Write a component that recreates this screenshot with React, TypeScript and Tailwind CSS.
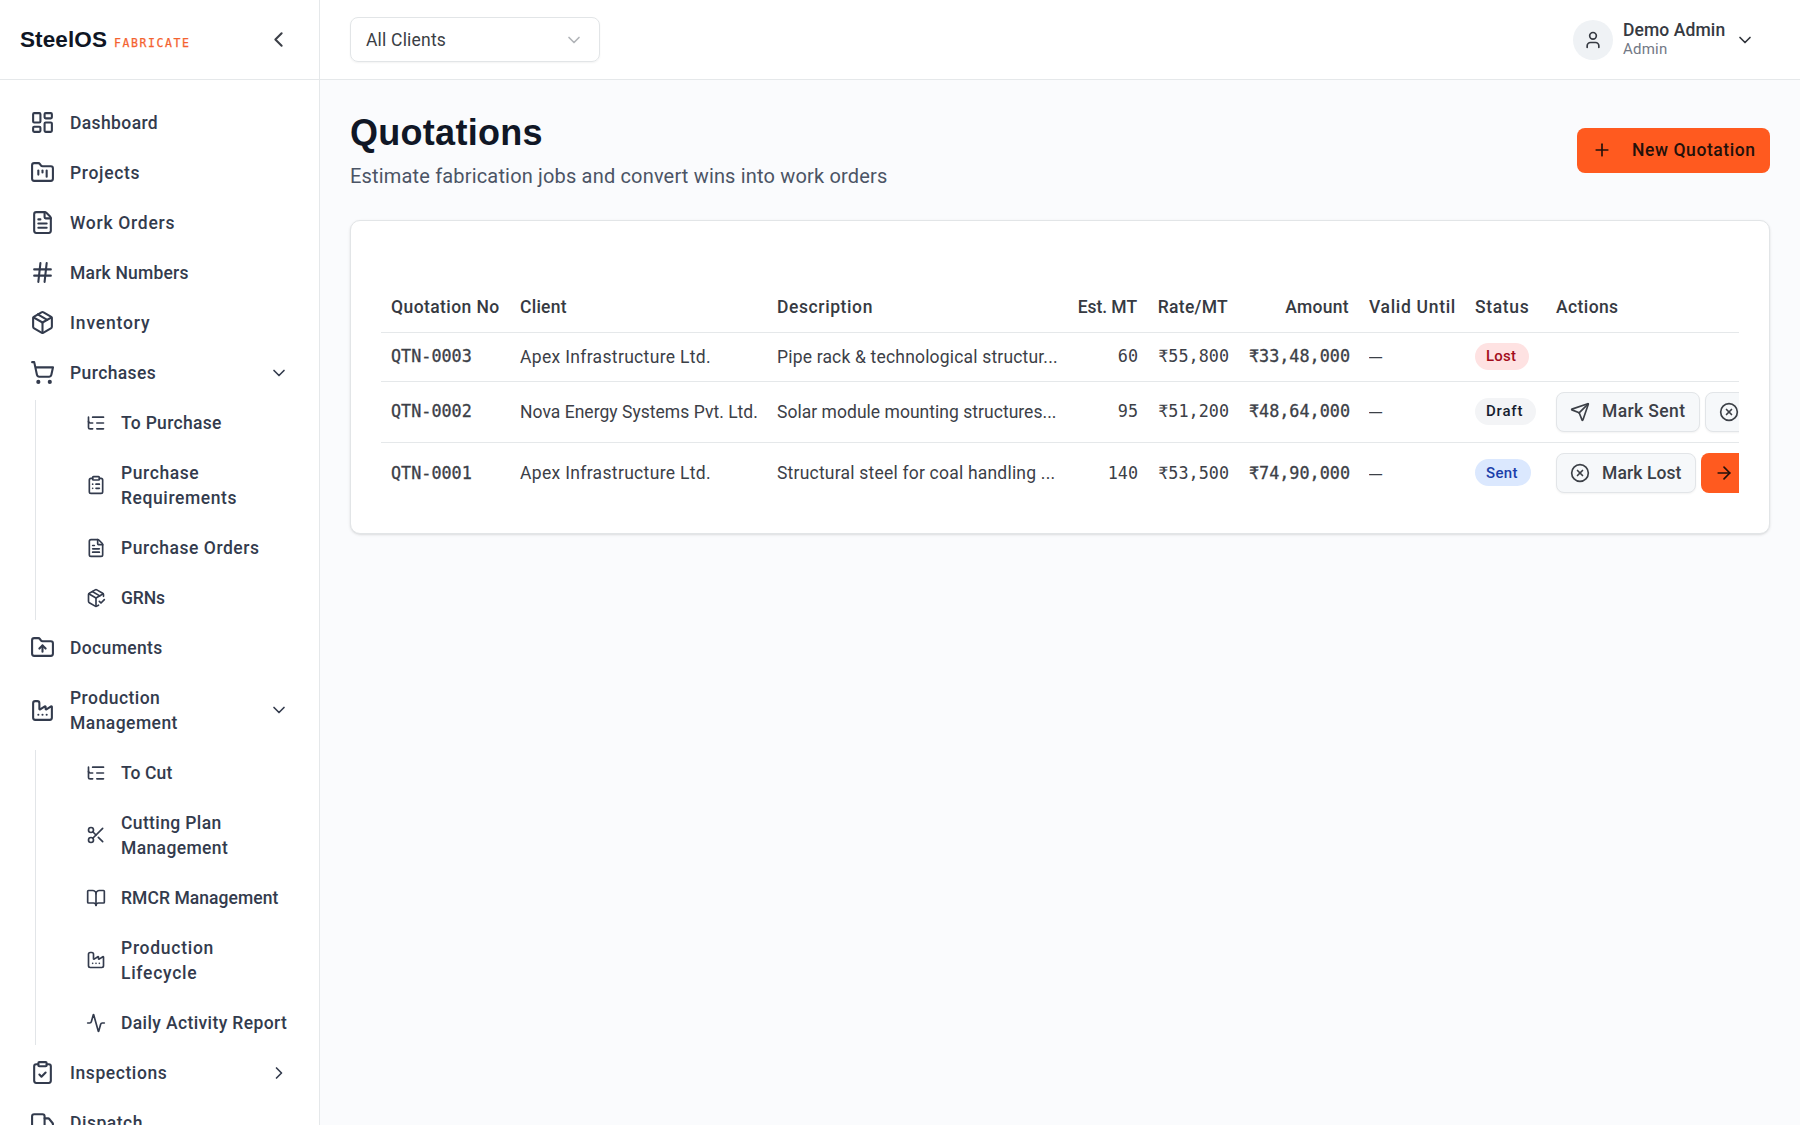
import React, { useState } from 'react';
import {
  Activity, ArrowRight, BookOpen, ChevronDown, ChevronLeft, ChevronRight, CircleX,
  ClipboardCheck, ClipboardList, Factory, FileText, FolderKanban, FolderUp, Hash,
  LayoutDashboard, ListTree, Package, PackageCheck, Plus, Scissors, Send,
  ShoppingCart, Truck, User,
} from 'lucide-react';

type NavItem = {
  label: string;
  icon: any;
  tracking: string;
  children?: NavItem[];
}

const navItems: NavItem[] = [
  { label: 'Dashboard', icon: LayoutDashboard, tracking: 'tracking-[0.38px]' },
  { label: 'Projects', icon: FolderKanban, tracking: 'tracking-[0.68px]' },
  { label: 'Work Orders', icon: FileText, tracking: 'tracking-[0.72px]' },
  { label: 'Mark Numbers', icon: Hash, tracking: 'tracking-[0.2px]' },
  { label: 'Inventory', icon: Package, tracking: 'tracking-[0.84px]' },
  {
    label: 'Purchases', icon: ShoppingCart, tracking: 'tracking-[0.4px]',
    children: [
      { label: 'To Purchase', icon: ListTree, tracking: 'tracking-[0.3px]' },
      { label: 'Purchase Requirements', icon: ClipboardList, tracking: 'tracking-[0.58px]' },
      { label: 'Purchase Orders', icon: FileText, tracking: 'tracking-[0.54px]' },
      { label: 'GRNs', icon: PackageCheck, tracking: 'tracking-[-0.1px]' },
    ],
  },
  { label: 'Documents', icon: FolderUp, tracking: 'tracking-[0.36px]' },
  {
    label: 'Production Management', icon: Factory, tracking: 'tracking-[0.45px]',
    children: [
      { label: 'To Cut', icon: ListTree, tracking: 'tracking-[0.1px]' },
      { label: 'Cutting Plan Management', icon: Scissors, tracking: 'tracking-[0.38px]' },
      { label: 'RMCR Management', icon: BookOpen, tracking: 'tracking-[0.06px]' },
      { label: 'Production Lifecycle', icon: Factory, tracking: 'tracking-[0.73px]' },
      { label: 'Daily Activity Report', icon: Activity, tracking: 'tracking-[0.38px]' },
    ],
  },
  { label: 'Inspections', icon: ClipboardCheck, tracking: 'tracking-[0.57px]', children: [] },
  { label: 'Dispatch', icon: Truck, tracking: 'tracking-[0.51px]' },
];

const columns = [
  { label: 'Quotation No', className: 'w-[129px] tracking-[0.42px]' },
  { label: 'Client', className: 'w-[257px] tracking-[0.25px]' },
  { label: 'Description', className: 'w-[300px] tracking-[0.6px]' },
  { label: 'Est. MT', className: 'w-[80px] text-right tracking-[-0.05px]' },
  { label: 'Rate/MT', className: 'w-[91px] text-right tracking-[0.29px]' },
  { label: 'Amount', className: 'w-[121px] text-right tracking-[0.3px]' },
  { label: 'Valid Until', className: 'w-[106px] tracking-[0.69px]' },
  { label: 'Status', className: 'w-[81px] tracking-[0.66px]' },
  { label: 'Actions', className: 'w-[280px] tracking-[0.4px]' },
];

const quotations = [
  {
    no: 'QTN-0003', client: 'Apex Infrastructure Ltd.', clientTracking: 'tracking-[0.33px]',
    description: 'Pipe rack & technological structur...', descTracking: 'tracking-[0.18px]',
    mt: '60', rate: '₹55,800', amount: '₹33,48,000', status: 'Lost',
  },
  {
    no: 'QTN-0002', client: 'Nova Energy Systems Pvt. Ltd.', clientTracking: 'tracking-[0.03px]',
    description: 'Solar module mounting structures...', descTracking: 'tracking-[0.03px]',
    mt: '95', rate: '₹51,200', amount: '₹48,64,000', status: 'Draft',
  },
  {
    no: 'QTN-0001', client: 'Apex Infrastructure Ltd.', clientTracking: 'tracking-[0.33px]',
    description: 'Structural steel for coal handling ...', descTracking: 'tracking-[0.21px]',
    mt: '140', rate: '₹53,500', amount: '₹74,90,000', status: 'Sent',
  },
];

const badgeStyles: Record<string, string> = {
  Lost: 'w-[54px] bg-[#fee2e2] text-[#a30d1b] tracking-[0.2px]',
  Draft: 'w-[61px] bg-[#f3f4f6] text-[#161d2f] tracking-[0.8px]',
  Sent: 'w-[56px] bg-[#dbe8fe] text-[#1c3faa] tracking-[0.35px]',
};

const mono = "font-['DejaVu_Sans_Mono',monospace] text-[16.8px]";

const NavLabel = ({ item }: { item: NavItem }) => (
  <span className={`block translate-y-px text-[17.5px] leading-[25px] font-medium ${item.tracking}`}>
    {item.label}
  </span>
);

const Sidebar = () => {
  const [open, setOpen] = useState<string[]>(['Purchases', 'Production Management']);

  const toggle = (label: string) => {
    setOpen(open.includes(label) ? open.filter((l) => l !== label) : [...open, label]);
  };

  return (
    <aside className="flex w-80 shrink-0 flex-col border-r border-[#e5e8ea] bg-white">
      <div className="flex h-20 shrink-0 items-center justify-between border-b border-[#e5e8ea] pl-5 pr-7">
        <div className="flex items-baseline font-['Liberation_Sans',sans-serif]">
          <span className="text-[22.5px] leading-[30px] font-bold tracking-[0.1px] text-[#0f1624]">SteelOS</span>
          <span className="ml-[7px] font-['DejaVu_Sans_Mono',monospace] text-[11.5px] tracking-[1.58px] text-[#f4622f] [-webkit-text-stroke:0.25px]">
            FABRICATE
          </span>
        </div>
        <ChevronLeft size={25} strokeWidth={2} className="text-[#3c4048]" />
      </div>
      <nav className="flex flex-col gap-[5px] px-5 pt-5 text-[#333b4d]">
        {navItems.map((item) => (
          <div key={item.label}>
            <button
              onClick={() => item.children && toggle(item.label)}
              className="flex w-full items-center gap-[15px] py-2.5 pr-2.5 pl-2.5 text-left"
            >
              <item.icon size={25} strokeWidth={2} className="shrink-0" />
              <span className="w-[150px]"><NavLabel item={item} /></span>
              {item.children && (
                open.includes(item.label)
                  ? <ChevronDown size={20} className="ml-auto shrink-0" />
                  : <ChevronRight size={20} className="ml-auto shrink-0" />
              )}
            </button>
            {item.children && item.children.length > 0 && open.includes(item.label) && (
              <div className="ml-[15px] mt-[5px] flex flex-col gap-[5px] border-l border-[#e2e5e8] pl-10">
                {item.children.map((child) => (
                  <button key={child.label} className="flex items-center gap-[15px] py-2.5 pr-2 pl-2.5 text-left">
                    <child.icon size={20} strokeWidth={2} className="shrink-0" />
                    <NavLabel item={child} />
                  </button>
                ))}
              </div>
            )}
          </div>
        ))}
      </nav>
    </aside>
  );
};

const Header = () => (
  <header className="flex h-20 shrink-0 items-center justify-between border-b border-[#e5e8ea] bg-white px-[30px]">
    <button className="flex h-[45px] w-[250px] items-center justify-between rounded-[8px] border border-[#e2e5e7] px-[15px] text-[17.5px] tracking-[0.2px] text-[#3a3e45] shadow-xs">
      <span className="translate-y-px">All Clients</span>
      <ChevronDown size={20} className="text-[#b1b4b8]" />
    </button>
    <div className="flex items-center pr-[15px]">
      <div className="flex size-10 items-center justify-center rounded-full bg-[#eff2f5]">
        <User size={20} className="text-[#363a42]" />
      </div>
      <div className="ml-2.5 w-[112px]">
        <p className="text-[17.5px] leading-[18px] font-medium tracking-[0.1px] text-[#363a42]">Demo Admin</p>
        <p className="translate-y-px text-[15px] leading-[19px] tracking-[0.24px] text-[#727885]">Admin</p>
      </div>
      <ChevronDown size={20} className="text-[#2f333a]" />
    </div>
  </header>
);

const RowActions = ({ status }: { status: string }) => {
  const outline = 'flex h-10 shrink-0 items-center gap-3 rounded-[8px] border border-[#e2e5e8] bg-[#f6f8fa] pl-[13px] font-medium shadow-xs';
  if (status === 'Draft') {
    return (
      <div className="flex gap-[5px]">
        <button className={`${outline} w-[144px] tracking-[0.38px]`}><Send size={20} />Mark Sent</button>
        <button className={`${outline} w-[140px]`} aria-label="Mark Lost"><CircleX size={20} /></button>
      </div>
    );
  }
  if (status === 'Sent') {
    return (
      <div className="flex gap-[5px]">
        <button className={`${outline} w-[140px] tracking-[0.1px]`}><CircleX size={20} />Mark Lost</button>
        <button
          className="flex h-10 w-[140px] shrink-0 items-center rounded-[8px] bg-[#ff5a1f] pl-[13px] text-[#23110b]"
          aria-label="Convert"
        >
          <ArrowRight size={20} />
        </button>
      </div>
    );
  }
  return null;
};

const QuotationTable = () => (
  <div className="overflow-hidden">
    <table className="w-[1445px] table-fixed text-left text-[17.5px] text-[#3c4047]">
      <thead>
        <tr className="h-[50px] border-b border-[#e5e8ea]">
          {columns.map((col) => (
            <th key={col.label} className={`px-2.5 font-medium whitespace-nowrap text-[#363a42] ${col.className}`}>
              {col.label}
            </th>
          ))}
        </tr>
      </thead>
      <tbody>
        {quotations.map((q) => (
          <tr
            key={q.no}
            className={`border-b border-[#e5e8ea] last:border-0 ${q.status === 'Lost' ? 'h-[49px]' : 'h-[61px]'}`}
          >
            <td className={`px-2.5 pt-px ${mono} [-webkit-text-stroke:0.3px]`}>{q.no}</td>
            <td className={`px-2.5 pt-px whitespace-nowrap ${q.clientTracking}`}>{q.client}</td>
            <td className={`px-2.5 pt-px whitespace-nowrap ${q.descTracking}`}>{q.description}</td>
            <td className={`pr-[9px] pt-px text-right ${mono}`}>{q.mt}</td>
            <td className={`pr-[9px] pt-px text-right ${mono}`}>{q.rate}</td>
            <td className={`pr-[9px] pt-px text-right ${mono} [-webkit-text-stroke:0.3px]`}>{q.amount}</td>
            <td className="px-2.5">
              <span className="inline-block origin-left scale-x-75 font-['Liberation_Sans',sans-serif]">—</span>
            </td>
            <td className="px-2.5">
              <span className={`flex h-[27px] items-center rounded-full pl-[11px] text-[15px] font-medium ${badgeStyles[q.status]}`}>
                {q.status}
              </span>
            </td>
            <td className="px-2.5"><RowActions status={q.status} /></td>
          </tr>
        ))}
      </tbody>
    </table>
  </div>
);

const App = () => {
  return (
    <div className="flex h-screen overflow-hidden bg-[#fafbfd] font-['Roboto',sans-serif]">
      <Sidebar />
      <div className="flex min-w-0 flex-1 flex-col">
        <Header />
        <main className="flex-1 p-[30px]">
          <div className="flex items-center justify-between">
            <div>
              <h1 className="font-['Liberation_Sans',sans-serif] text-[36px] leading-[45px] font-bold tracking-[0.28px] text-[#101726]">
                Quotations
              </h1>
              <p className="mt-[5px] translate-y-px text-[20px] leading-[30px] tracking-[0.17px] text-[#4b5465]">
                Estimate fabrication jobs and convert wins into work orders
              </p>
            </div>
            <button className="flex h-[45px] w-[193px] items-center gap-5 rounded-[8px] bg-[#ff5a1f] pl-[15px] text-[17.5px] font-medium tracking-[0.58px] whitespace-nowrap text-[#23110b]">
              <Plus size={20} />
              New Quotation
            </button>
          </div>
          <div className="mt-[30px] rounded-[10px] border border-[#e2e5e7] bg-white px-[30px] pt-[61px] pb-[30px] shadow-sm">
            <QuotationTable />
          </div>
        </main>
      </div>
    </div>
  );
};

export default App;
